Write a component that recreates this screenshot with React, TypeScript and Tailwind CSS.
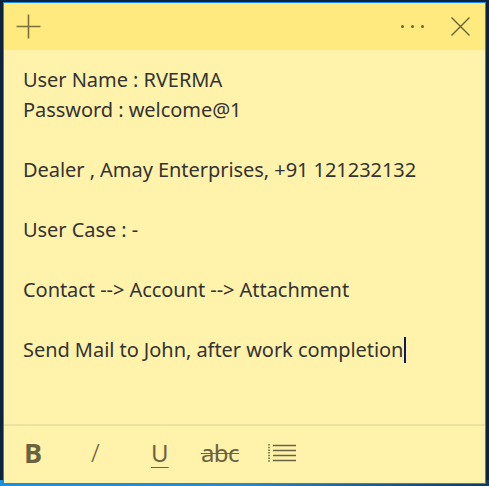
import React from 'react'

const lines = [
  'User Name : RVERMA',
  'Password : welcome@1',
  '',
  'Dealer , Amay Enterprises, +91 121232132',
  '',
  'User Case : -',
  '',
  'Contact --> Account --> Attachment',
  '',
  'Send Mail to John, after work completion',
]

export default function App() {
  return (
    <div className="w-[489px] h-[486px] relative overflow-hidden bg-[#0a2340]">
      {/* desktop strip under the note */}
      <div className="absolute left-0 bottom-0 w-full h-[6px] bg-gradient-to-r from-[#1b8fe0] via-[#2f86c9] to-[#0d3a66]" />

      {/* note window */}
      <div className="absolute left-[3px] top-[2px] w-[483px] h-[482px] border border-[#1e88e5] bg-[#fff2ab] flex flex-col font-['Noto_Sans',sans-serif] text-[#333]">
        {/* header */}
        <div className="h-[47px] bg-[#ffea80] flex items-center px-[12px] shrink-0">
          <svg width="25" height="25" viewBox="0 0 25 25" className="text-[#7b703d]">
            <path d="M12.5 0.5 V24.5 M0.5 12.5 H24.5" stroke="currentColor" strokeWidth="1.6" fill="none" />
          </svg>
          <div className="flex-1" />
          <div className="flex items-center gap-[7px] mr-[27px]">
            <span className="w-[3px] h-[3px] bg-[#6f6538] rounded-full" />
            <span className="w-[3px] h-[3px] bg-[#6f6538] rounded-full" />
            <span className="w-[3px] h-[3px] bg-[#6f6538] rounded-full" />
          </div>
          <svg width="19" height="19" viewBox="0 0 19 19" className="text-[#6b6136] mr-[3px]">
            <path d="M0.5 0.5 L18.5 18.5 M18.5 0.5 L0.5 18.5" stroke="currentColor" strokeWidth="1.4" fill="none" />
          </svg>
        </div>

        {/* body text */}
        <div className="flex-1 pl-[19px] pt-[15px] text-[20px] leading-[30px] tracking-[-0.05px]">
          {lines.map((l, i) => (
            <div key={i} className="h-[30px] whitespace-nowrap flex items-center">
              {l}
              {i === lines.length - 1 && <span className="inline-block w-[2px] h-[26px] bg-[#0b1a5c] ml-[1px]" />}
            </div>
          ))}
        </div>

        {/* toolbar */}
        <div className="h-[59px] border-t-2 border-[#efe2a0] flex items-center text-[#6b6340] shrink-0 pb-[4px]">
          <span className="ml-[20px] w-[17px] font-['Open_Sans',sans-serif] font-bold text-[27px] leading-none">B</span>
          <span className="ml-[50px] w-[10px] text-[25px] leading-none font-light">/</span>
          <span className="ml-[50px] w-[16px] text-[24px] leading-none underline underline-offset-[5px] decoration-1">U</span>
          <span className="ml-[34px] text-[24px] leading-none line-through decoration-1 tracking-[-0.6px]">abc</span>
          <svg width="28" height="18" viewBox="0 0 28 18" className="ml-[29px]">
            <g stroke="currentColor" strokeWidth="1.5">
              <path d="M5 1.5 H28 M5 6.5 H28 M5 11.5 H28 M5 16.5 H28" />
              <path d="M1 0 V18" strokeDasharray="1.5 1.2" />
            </g>
          </svg>
        </div>
      </div>
    </div>
  )
}
